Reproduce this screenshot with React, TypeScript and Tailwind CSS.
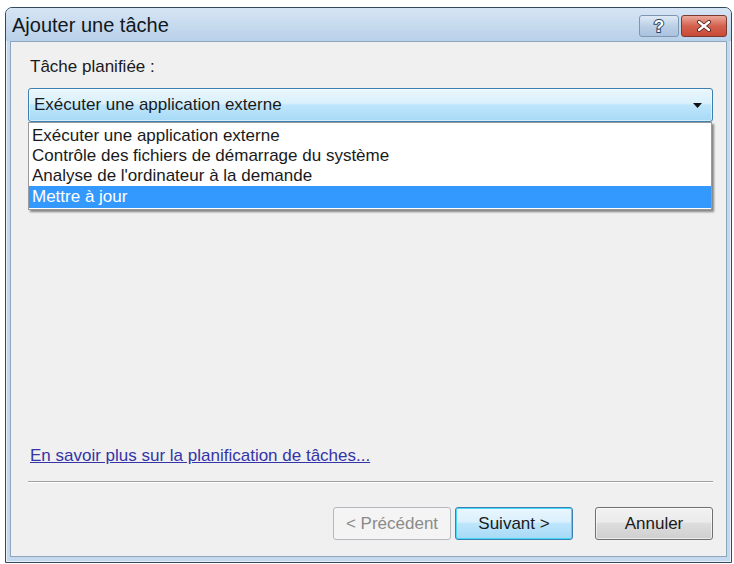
import React from "react";

const items = [
  "Exécuter une application externe",
  "Contrôle des fichiers de démarrage du système",
  "Analyse de l'ordinateur à la demande",
  "Mettre à jour",
];

const font = { fontFamily: '"Liberation Sans", Arial, sans-serif' };

function CaptionButtons() {
  return (
    <div className="flex items-start gap-[2px] pt-[7px]">
      {/* help */}
      <div className="w-[40px] h-[22px] rounded-[3px] border border-[#7f96b0] bg-gradient-to-b from-[#dfeaf6] via-[#bcd0e6] to-[#a9c2de] flex items-center justify-center">
        <span className="text-[17px] font-bold leading-none text-white [-webkit-text-stroke:2px_#2b4360] [paint-order:stroke_fill]">?</span>
      </div>
      {/* close */}
      <div className="w-[46px] h-[22px] rounded-[3px] border border-[#7a3a30] bg-gradient-to-b from-[#e9a99b] via-[#d4614f] to-[#c84a36] flex items-center justify-center">
        <svg width="16" height="12" viewBox="0 0 16 12">
          <path d="M3 2 L13 10 M13 2 L3 10" stroke="#4a1a14" strokeWidth="4" strokeLinecap="round" />
          <path d="M3 2 L13 10 M13 2 L3 10" stroke="#ffffff" strokeWidth="2.4" strokeLinecap="round" />
        </svg>
      </div>
    </div>
  );
}

export default function App() {
  return (
    <div className="w-[734px] h-[564px] bg-white pt-[7px] pl-[5px] overflow-hidden" style={font}>
      <div className="w-[727px] h-[556px] rounded-t-[7px] border border-[#34495c] bg-[#c4d9ee] flex flex-col shadow-[inset_0_0_0_1px_#e8f1fa]">
        {/* Title bar */}
        <div className="h-[33px] shrink-0 flex justify-between pl-[6px] pr-[4px] rounded-t-[6px] bg-gradient-to-b from-[#d6e5f4] to-[#b9d0e9]">
          <div className="text-[20px] text-[#101820] pt-[7px] leading-none">Ajouter une tâche</div>
          <CaptionButtons />
        </div>

        {/* Body */}
        <div className="flex-1 mx-[4px] mb-[5px] border border-[#8ea6bd] bg-[#f0f0f0] flex flex-col pl-[17px] pr-[13px] pt-[15px] pb-[16px] text-[17px] text-[#1a1a1a]">
          <div className="leading-[20px] pl-[2px]">Tâche planifiée :</div>

          <div className="relative mt-[11px]">
            <div className="h-[34px] rounded-[3px] border border-[#3c7fb1] bg-[linear-gradient(to_bottom,#eaf6fd_0%,#d9f0fc_45%,#bee6fd_50%,#a7d9f5_100%)] flex items-center justify-between pl-[5px] pr-[10px] shadow-[inset_0_0_0_1px_rgba(255,255,255,0.5)]">
              <span>Exécuter une application externe</span>
              <svg width="9" height="5" viewBox="0 0 9 5">
                <path d="M0 0 H9 L4.5 5 Z" fill="#111" />
              </svg>
            </div>
            <div className="absolute left-0 right-[1px] top-full bg-white border border-[#9a9a9a] shadow-[2px_2px_2px_rgba(0,0,0,0.45)] pt-[3px] pb-[1px]">
              {items.map((t, i) => (
                <div
                  key={t}
                  className={
                    i === 3
                      ? "h-[22px] leading-[22px] pl-[3px] bg-[#3399ff] text-white"
                      : "h-[20px] leading-[20px] pl-[3px]"
                  }
                >
                  {t}
                </div>
              ))}
            </div>
          </div>

          <div className="flex-1" />

          <a className="leading-[20px] text-[#3434a8] underline self-start pl-[2px]">
            En savoir plus sur la planification de tâches...
          </a>

          <div className="mt-[15px] h-[1px] bg-[#a0a0a0] border-b border-white box-content" />

          <div className="mt-[24px] flex justify-end gap-[4px]">
            <div className="w-[118px] h-[33px] rounded-[3px] border border-[#b5b9bd] bg-[#f4f4f4] text-[#8a8a8a] flex items-center justify-center">
              &lt; Précédent
            </div>
            <div className="w-[118px] h-[33px] rounded-[3px] border border-[#3c7fb1] bg-[linear-gradient(to_bottom,#eaf6fd_0%,#d9f0fc_45%,#bee6fd_50%,#a7d9f5_100%)] shadow-[inset_0_0_0_1px_#48d8fb] flex items-center justify-center">
              Suivant &gt;
            </div>
            <div className="ml-[18px] w-[118px] h-[33px] rounded-[3px] border border-[#707070] bg-[linear-gradient(to_bottom,#f2f2f2_0%,#ebebeb_45%,#dddddd_50%,#cfcfcf_100%)] shadow-[inset_0_0_0_1px_rgba(255,255,255,0.6)] flex items-center justify-center">
              Annuler
            </div>
          </div>
        </div>
      </div>
    </div>
  );
}
